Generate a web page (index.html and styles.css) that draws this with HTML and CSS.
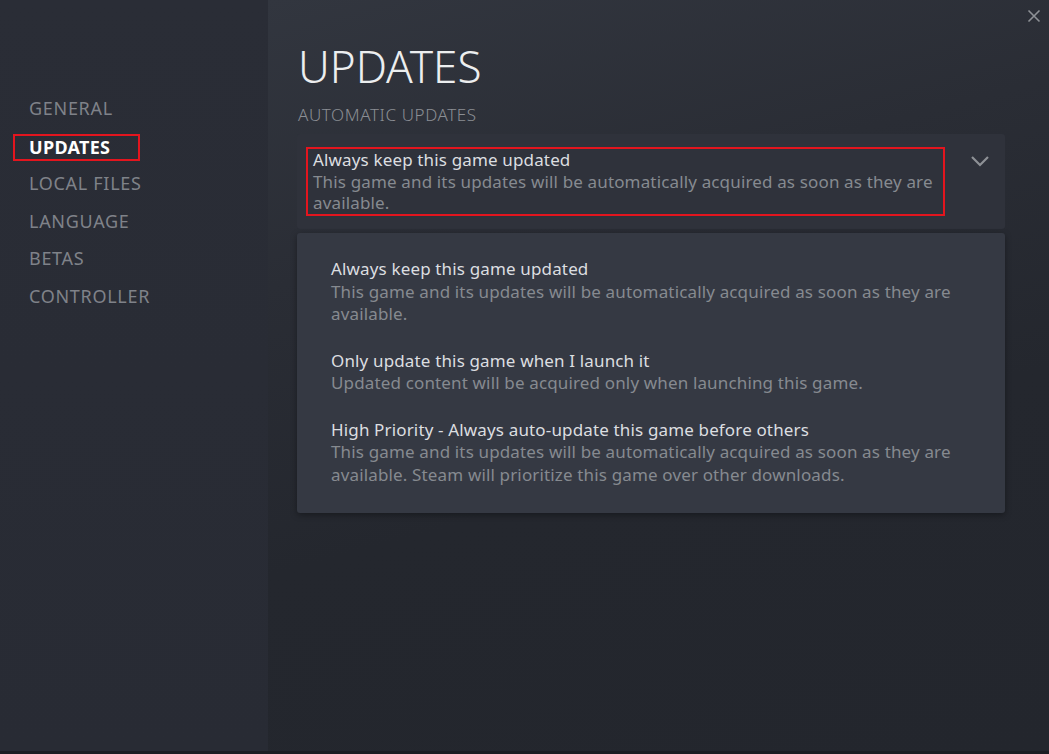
FILE: index.html
```html
<!DOCTYPE html>
<html lang="en">
<head>
<meta charset="utf-8">
<title>Updates</title>
<link rel="stylesheet" href="styles.css">
</head>
<body>
<div class="window">
  <nav class="sidebar">
    <div class="nav-item">GENERAL</div>
    <div class="nav-item active"><span class="nav-label">UPDATES</span></div>
    <div class="nav-item">LOCAL FILES</div>
    <div class="nav-item">LANGUAGE</div>
    <div class="nav-item">BETAS</div>
    <div class="nav-item">CONTROLLER</div>
  </nav>
  <main class="main">
    <button class="close" aria-label="Close">
      <svg width="14" height="14" viewBox="0 0 14 14"><path d="M1.5 1.5 L12.5 12.5 M12.5 1.5 L1.5 12.5" stroke="#8e9196" stroke-width="1.6" fill="none"/></svg>
    </button>
    <h1 class="title">UPDATES</h1>
    <div class="section-label">AUTOMATIC UPDATES</div>
    <div class="select">
      <div class="select-value">
        <div class="opt-title">Always keep this game updated</div>
        <div class="opt-desc">This game and its updates will be automatically acquired as soon as they are available.</div>
      </div>
      <svg class="chevron" width="20" height="12" viewBox="0 0 20 12"><path d="M2 2 L10 10 L18 2" stroke="#8e9196" stroke-width="2.2" fill="none"/></svg>
    </div>
    <div class="dropdown">
      <div class="option">
        <div class="opt-title">Always keep this game updated</div>
        <div class="opt-desc">This game and its updates will be automatically acquired as soon as they are available.</div>
      </div>
      <div class="option">
        <div class="opt-title">Only update this game when I launch it</div>
        <div class="opt-desc">Updated content will be acquired only when launching this game.</div>
      </div>
      <div class="option">
        <div class="opt-title">High Priority - Always auto-update this game before others</div>
        <div class="opt-desc">This game and its updates will be automatically acquired as soon as they are available. Steam will prioritize this game over other downloads.</div>
      </div>
    </div>
  </main>
</div>
<div class="bottom-strip"></div>
</body>
</html>
```

FILE: styles.css
```css
html, body {
  margin: 0;
  padding: 0;
  width: 1049px;
  height: 754px;
  overflow: hidden;
  background: #1c1e23;
  font-family: "Noto Sans", "Open Sans", sans-serif;
}

.window {
  display: flex;
  height: 751px;
}

.sidebar {
  width: 268px;
  flex-shrink: 0;
  background: linear-gradient(180deg, #2a2d36 0%, #282b34 100%);
  padding-top: 90px;
  box-sizing: border-box;
}

.nav-item {
  height: 37.6px;
  line-height: 37.6px;
  padding-left: 29px;
  font-size: 18px;
  letter-spacing: 0.7px;
  color: #7f8289;
}

.nav-item.active {
  color: #ffffff;
  font-weight: 700;
  letter-spacing: 0.3px;
}

.nav-label {
  display: inline-block;
  line-height: 23px;
  border: 2px solid #e3151e;
  padding: 0 28px 0 14px;
  margin-left: -16px;
  vertical-align: middle;
}

.main {
  flex: 1;
  position: relative;
  padding: 36px 0 0 29px;
  background: linear-gradient(165deg, #32363f 0%, #2a2d35 30%, #24272e 60%, #23262d 100%);
}

.close {
  position: absolute;
  top: 9px;
  right: 8px;
  background: none;
  border: 0;
  padding: 0;
  width: 14px;
  height: 14px;
}

.title {
  margin: 0;
  font-size: 44px;
  font-weight: 300;
  line-height: 60px;
  letter-spacing: 0;
  color: #eceeef;
  padding-left: 1px;
}

.section-label {
  margin-top: 7px;
  font-size: 17px;
  font-weight: 300;
  line-height: 24px;
  letter-spacing: 0.6px;
  color: #8b8e94;
  padding-left: 1px;
}

.select {
  margin-top: 7px;
  width: 708px;
  box-sizing: border-box;
  background: #2f323b;
  border-radius: 3px;
  padding: 13px 0 13px 9px;
  display: flex;
  align-items: flex-start;
}

.select-value {
  width: 639px;
  box-sizing: border-box;
  border: 2px solid #e3151e;
  padding: 0 5px;
}

.select .opt-title,
.select .opt-desc {
  line-height: 21.7px;
}

.chevron {
  margin: 8px 0 0 25px;
}

.opt-title {
  font-size: 17px;
  line-height: 22.5px;
  letter-spacing: 0.15px;
  color: #dcdee0;
}

.opt-desc {
  font-size: 17px;
  line-height: 22.5px;
  letter-spacing: 0.15px;
  color: #868a90;
}

.dropdown {
  margin-top: 4px;
  width: 708px;
  box-sizing: border-box;
  background: #353943;
  border-radius: 3px;
  padding: 25px 0 27px 34px;
  display: flex;
  flex-direction: column;
  gap: 24px;
  box-shadow: 0 2px 6px rgba(0, 0, 0, 0.35);
}

.option {
  width: 640px;
}

.bottom-strip {
  height: 3px;
  background: #1c1e23;
}
```
